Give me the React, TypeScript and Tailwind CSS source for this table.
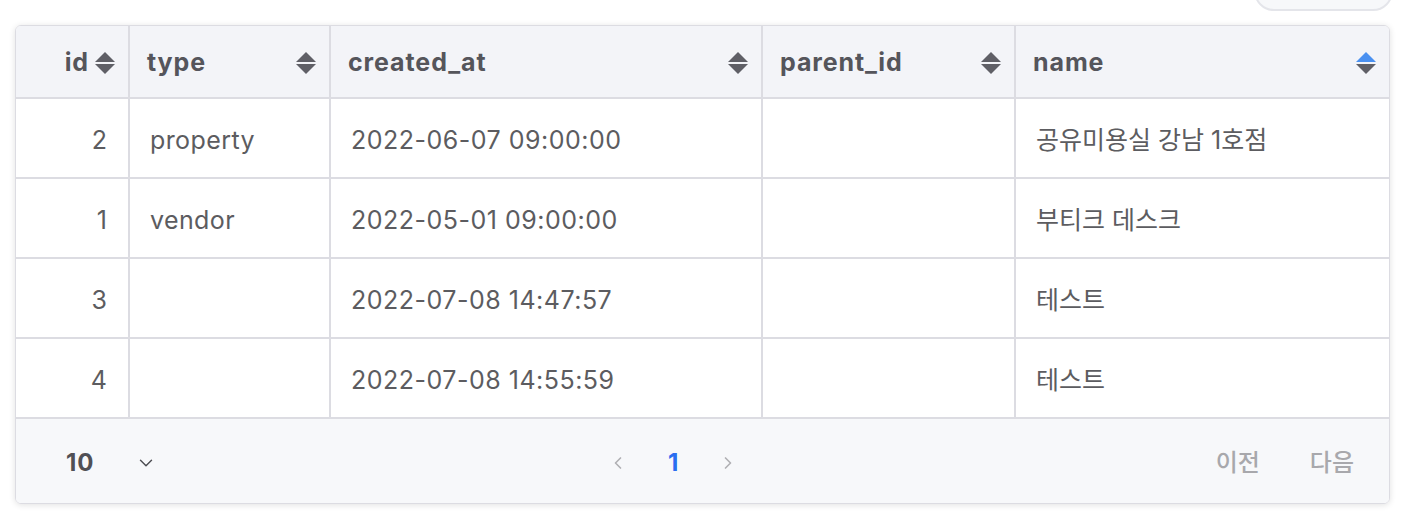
import { ChevronDown, ChevronLeft, ChevronRight } from 'lucide-react'

type Row = {
  id: number
  type: string
  createdAt: string
  parentId: string
  name: string
}

const rows: Row[] = [
  { id: 2, type: 'property', createdAt: '2022-06-07 09:00:00', parentId: '', name: '공유미용실 강남 1호점' },
  { id: 1, type: 'vendor', createdAt: '2022-05-01 09:00:00', parentId: '', name: '부티크 데스크' },
  { id: 3, type: '', createdAt: '2022-07-08 14:47:57', parentId: '', name: '테스트' },
  { id: 4, type: '', createdAt: '2022-07-08 14:55:59', parentId: '', name: '테스트' },
]

const SortIcon = ({ active = false }: { active?: boolean }) => (
  <svg width="20" height="22" viewBox="0 0 20 22" className="shrink-0">
    <polygon points="10,0 20,10 0,10" fill={active ? '#4a90f0' : '#5f5f66'} />
    <polygon points="0,12 20,12 10,22" fill="#5f5f66" />
  </svg>
)

const App = () => {
  const font = "font-['Inter','Noto_Sans_CJK_KR',sans-serif]"

  return (
    <div className={`w-full h-[522px] bg-white pl-[15px] pr-[14px] ${font}`}>
      <div className="flex justify-end h-[25px]">
        <div className="w-[139px] h-[40px] -mt-[29px] -mr-[3px] rounded-[20px] border-2 border-[#e4e5ea] bg-[#f7f8fa]" />
      </div>
      <div className="rounded-[6px] border border-[#dcdce2] shadow-[0_1px_6px_rgba(0,0,0,0.12)] overflow-hidden">
        <table className="w-full table-fixed border-collapse">
          <colgroup>
            <col className="w-[113px]" />
            <col className="w-[201px]" />
            <col className="w-[432px]" />
            <col className="w-[253px]" />
            <col />
          </colgroup>
          <thead>
            <tr className="h-[72px] bg-[#f3f4f8] border-b-2 border-[#dcdce2] text-[25px] tracking-[0.9px] font-bold text-[#55555b]">
              <th className="border-r-2 border-[#dcdce2] pr-[13px] font-bold">
                <div className="flex items-center justify-end gap-[6px] pt-[3px]">
                  <span>id</span>
                  <SortIcon />
                </div>
              </th>
              <th className="border-r-2 border-[#dcdce2] pl-[17px] pr-[13px] font-bold">
                <div className="flex items-center justify-between pt-[3px]">
                  <span>type</span>
                  <SortIcon />
                </div>
              </th>
              <th className="border-r-2 border-[#dcdce2] pl-[17px] pr-[13px] font-bold">
                <div className="flex items-center justify-between pt-[3px]">
                  <span>created_at</span>
                  <SortIcon />
                </div>
              </th>
              <th className="border-r-2 border-[#dcdce2] pl-[17px] pr-[13px] font-bold">
                <div className="flex items-center justify-between pt-[3px]">
                  <span>parent_id</span>
                  <SortIcon />
                </div>
              </th>
              <th className="pl-[17px] pr-[13px] font-bold">
                <div className="flex items-center justify-between pt-[3px]">
                  <span>name</span>
                  <SortIcon active />
                </div>
              </th>
            </tr>
          </thead>
          <tbody className="text-[25px] text-[#5c5c60]">
            {rows.map((row) => (
              <tr key={row.id} className="h-[80px] border-b-2 border-[#dcdce2]">
                <td className="border-r-2 border-[#dcdce2] pr-[21px] pt-[5px] text-right">{row.id}</td>
                <td className="border-r-2 border-[#dcdce2] pl-[20px] pt-[5px] tracking-[0.4px]">{row.type}</td>
                <td className="border-r-2 border-[#dcdce2] pl-[20px] pt-[5px] tracking-[0.5px]">{row.createdAt}</td>
                <td className="border-r-2 border-[#dcdce2] pl-[20px] pt-[5px]">{row.parentId}</td>
                <td className="pl-[20px] pt-[5px]">{row.name}</td>
              </tr>
            ))}
          </tbody>
        </table>
        <div className="h-[84px] pt-[3px] bg-[#f7f8fa] flex items-center text-[24px]">
          <div className="flex items-center w-[560px] pl-[50px]">
            <span className="font-bold text-[#505055] tracking-[1px]">10</span>
            <ChevronDown className="ml-[40px] text-[#505055]" size={22} strokeWidth={1.6} />
          </div>
          <div className="flex items-center gap-[40px] ml-[32px]">
            <ChevronLeft className="text-[#b0b0b4]" size={20} strokeWidth={2} />
            <span className="font-bold text-[#2a6ef0]">1</span>
            <ChevronRight className="text-[#b0b0b4]" size={20} strokeWidth={2} />
          </div>
          <div className="ml-auto flex items-center gap-[50px] pr-[35px] font-medium text-[#a8a8ac]">
            <span>이전</span>
            <span>다음</span>
          </div>
        </div>
      </div>
    </div>
  )
}

export default App
